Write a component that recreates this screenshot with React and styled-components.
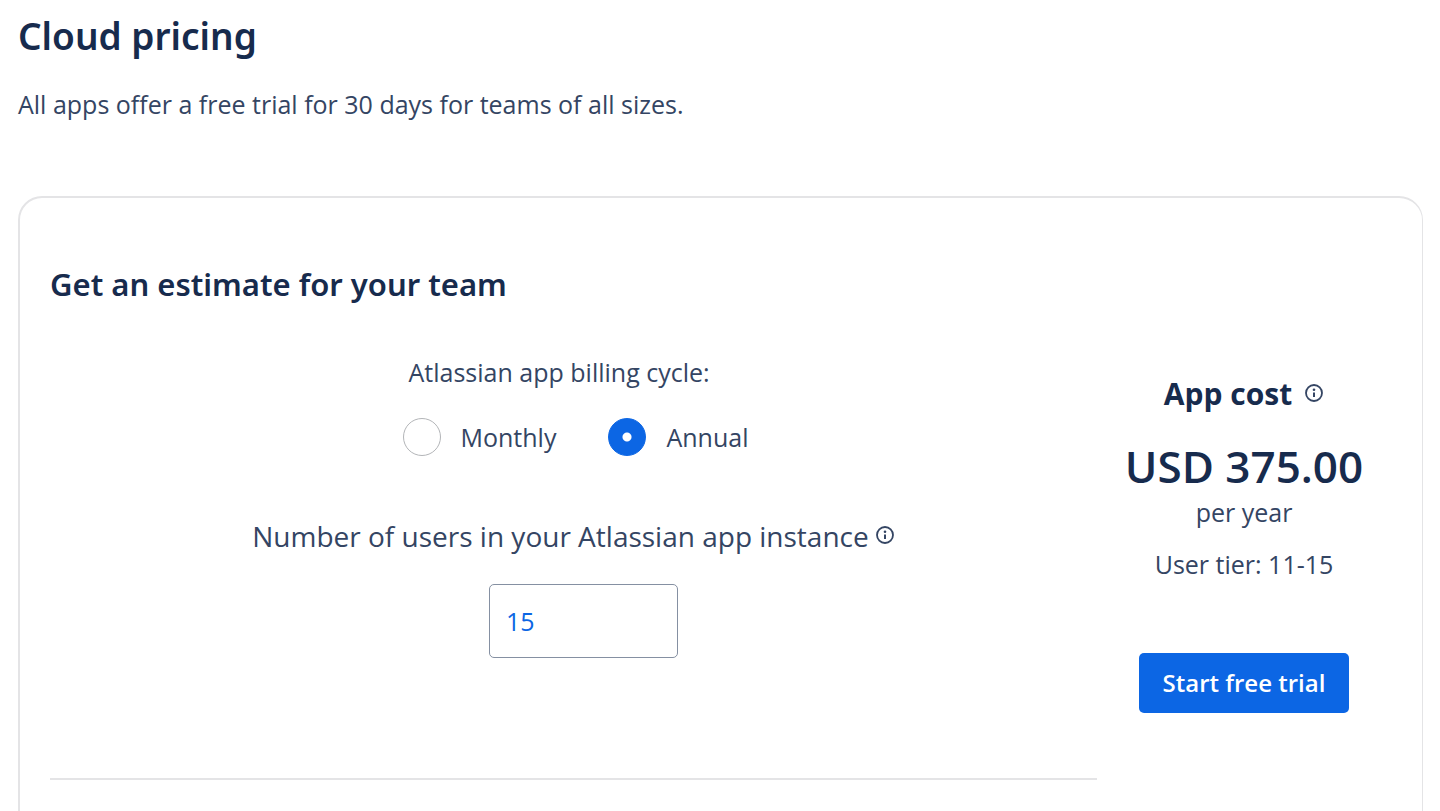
import React, { useState } from 'react';
import styled, { createGlobalStyle } from 'styled-components';

function InfoIcon() {
    return (
        <svg width="20" height="20" viewBox="0 0 20 20" fill="none" aria-hidden="true">
            <circle cx="10" cy="10" r="8" stroke="currentColor" strokeWidth="1.8" />
            <circle cx="10" cy="6.8" r="1.3" fill="currentColor" />
            <path d="M10 9.4V14" stroke="currentColor" strokeWidth="2" />
        </svg>
    );
}

function App() {
    const [cycle, setCycle] = useState('annual');
    const [users, setUsers] = useState('15');

    return (
        <PageStyled>
            <GlobalStyle />
            <PageTitle>Cloud pricing</PageTitle>
            <Intro>All apps offer a free trial for 30 days for teams of all sizes.</Intro>

            <Card>
                <CardTitle>Get an estimate for your team</CardTitle>
                <Columns>
                    <Estimate>
                        <BillingCycle>
                            <legend>Atlassian app billing cycle:</legend>
                            <div className="options">
                                <label>
                                    <Radio
                                        name="cycle"
                                        checked={cycle === 'monthly'}
                                        onChange={() => setCycle('monthly')}
                                    />
                                    Monthly
                                </label>
                                <label>
                                    <Radio
                                        name="cycle"
                                        checked={cycle === 'annual'}
                                        onChange={() => setCycle('annual')}
                                    />
                                    Annual
                                </label>
                            </div>
                        </BillingCycle>
                        <UsersLabel>
                            <label htmlFor="users">Number of users in your Atlassian app instance</label>
                            <InfoButton type="button" aria-label="About user count">
                                <InfoIcon />
                            </InfoButton>
                        </UsersLabel>
                        <UsersInput
                            id="users"
                            value={users}
                            onChange={(e) => setUsers(e.target.value)}
                        />
                    </Estimate>

                    <Cost>
                        <CostTitle>
                            App cost
                            <InfoButton type="button" aria-label="About app cost">
                                <InfoIcon />
                            </InfoButton>
                        </CostTitle>
                        <Price>USD 375.00</Price>
                        <Period>per year</Period>
                        <Tier>User tier: 11-15</Tier>
                        <TrialButton type="button">Start free trial</TrialButton>
                    </Cost>
                </Columns>
            </Card>
        </PageStyled>
    );
}

const GlobalStyle = createGlobalStyle`
    * {
        box-sizing: border-box;
    }
    body {
        margin: 0;
        background: #fff;
        color: #344563;
        font-family: 'Open Sans', 'Noto Sans', sans-serif;
        font-size: 25px;
        line-height: 36px;
    }
    h1, h2, h3, p {
        margin: 0;
    }
    button, input {
        font: inherit;
    }
`;

const PageStyled = styled.main`
    padding: 16px 17px 32px 18px;
`;

const PageTitle = styled.h1`
    color: #172b4d;
    font-family: 'Noto Sans', sans-serif;
    font-size: 37px;
    font-weight: 600;
    line-height: 40px;
`;

const Intro = styled.p`
    padding-top: 30px;
`;

const Card = styled.section`
    margin-top: 74px;
    padding: 66px 31px 64px 30px;
    border: solid #e4e4e6;
    border-width: 2px 1px 2px 2px;
    border-radius: 24px;
`;

const CardTitle = styled.h2`
    color: #172b4d;
    font-family: 'Noto Sans', sans-serif;
    font-size: 31px;
    font-weight: 600;
    line-height: 40px;
`;

const Columns = styled.div`
    display: grid;
    grid-template-columns: 1fr 294px;
    align-items: start;
`;

const Estimate = styled.div`
    display: flex;
    flex-direction: column;
    align-items: center;
    padding: 50px 0 120px;
    border-bottom: 2px solid #e4e4e6;
`;

const BillingCycle = styled.fieldset`
    margin: 0;
    padding: 0 0 0 4px;
    border: 0;

    legend {
        padding: 0 0 28px 6px;
    }
    .options {
        display: flex;
        gap: 52px;
    }
    label {
        display: flex;
        align-items: center;
        gap: 20px;
    }
`;

const Radio = styled.input.attrs({ type: 'radio' })`
    appearance: none;
    width: 38px;
    height: 38px;
    margin: 0;
    border: 1px solid #b3b5b8;
    border-radius: 50%;
    background: #fff;

    &:checked {
        border-color: #0c66e4;
        background: radial-gradient(circle, #fff 4px, #0c66e4 5px);
    }
`;

const UsersLabel = styled.div`
    display: flex;
    align-items: center;
    gap: 6px;
    padding: 60px 0 28px;
    font-size: 28px;
    line-height: 40px;
`;

const InfoButton = styled.button`
    display: flex;
    padding: 0 0 2px;
    border: 0;
    background: none;
    color: #344563;
`;

const UsersInput = styled.input`
    width: 189px;
    height: 74px;
    margin-left: 20px;
    padding: 0 16px;
    border: 1px solid #8590a2;
    border-radius: 5px;
    background: #fff;
    color: #0c66e4;
`;

const Cost = styled.aside`
    display: flex;
    flex-direction: column;
    align-items: center;
    padding-top: 70px;
`;

const CostTitle = styled.h3`
    display: flex;
    align-items: center;
    gap: 12px;
    color: #172b4d;
    font-size: 30px;
    font-weight: 700;
    line-height: 40px;
`;

const Price = styled.p`
    padding-top: 24px;
    color: #172b4d;
    font-size: 44px;
    font-weight: 600;
    line-height: 56px;
`;

const Period = styled.p`
    color: #344563;
`;

const Tier = styled.p`
    padding-top: 16px;
`;

const TrialButton = styled.button`
    width: 210px;
    height: 60px;
    margin-top: 71px;
    padding: 0;
    border: 0;
    border-radius: 5px;
    background: #0c66e4;
    color: #fff;
    font-size: 24px;
    font-weight: 600;
`;

export default App;
